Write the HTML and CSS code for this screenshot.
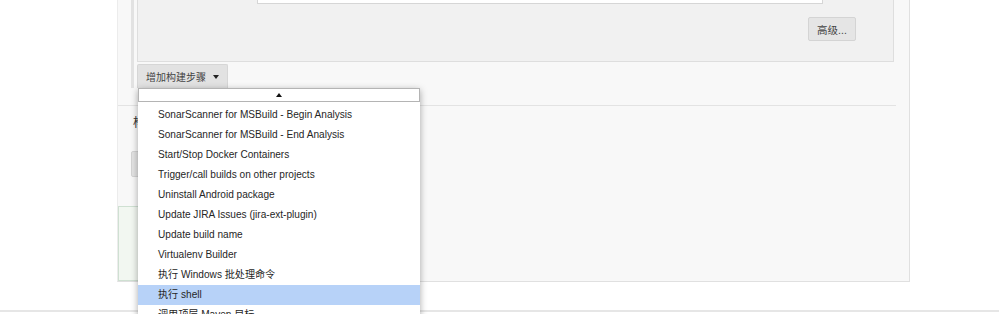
FILE: index.html
```html
<!DOCTYPE html>
<html lang="zh">
<head>
<meta charset="utf-8">
<link rel="stylesheet" href="styles.css">
</head>
<body>
<div class="page">
  <div class="build">
    <div class="chunk">
      <div class="textarea"></div>
      <div class="adv-row"><button class="btn adv">高级...</button></div>
    </div>
    <button class="add-step"><span>增加构建步骤</span><span class="caret"></span></button>
  </div>
  <div class="sep"></div>
  <div class="post">
    <div class="post-title">构建后操作</div>
    <button class="btn post-btn" aria-label="增加构建后操作步骤"></button>
    <div class="greenbox"></div>
  </div>

  <div class="menu">
    <div class="menu-up"><span class="up"></span></div>
    <ul class="menu-list">
      <li>SonarScanner for MSBuild - Begin Analysis</li>
      <li>SonarScanner for MSBuild - End Analysis</li>
      <li>Start/Stop Docker Containers</li>
      <li>Trigger/call builds on other projects</li>
      <li>Uninstall Android package</li>
      <li>Update JIRA Issues (jira-ext-plugin)</li>
      <li>Update build name</li>
      <li>Virtualenv Builder</li>
      <li>执行 Windows 批处理命令</li>
      <li class="active">执行 shell</li>
      <li>调用顶层 Maven 目标</li>
    </ul>
  </div>
</div>
<div class="footer-line"></div>
</body>
</html>
```

FILE: styles.css
```css
* { box-sizing: border-box; }
html, body { margin: 0; padding: 0; background: #fff; }
body {
  font-family: "Liberation Sans", Arial, "Noto Sans CJK SC", sans-serif;
  font-size: 10px;
  color: #333;
  overflow: hidden;
  height: 314px;
}
.page {
  position: relative;
  margin-left: 117px;
  width: 793px;
  height: 282px;
  background: #f8f8f8;
  border-left: 1px solid #ececec;
  border-right: 1px solid #e0e0e0;
  border-bottom: 1px solid #e0e0e0;
}
.build {
  margin-left: 13px;
  border-left: 3px solid #e2e2e2;
  padding-left: 3px;
  height: 88px;
}
.chunk {
  width: 757px;
  height: 62px;
  background: #f1f1f1;
  border: 1px solid #dedede;
  border-top: none;
  padding-left: 119px;
}
.textarea {
  width: 566px;
  height: 4px;
  background: #fff;
  border: 1px solid #d6d6d6;
  border-top: none;
}
.adv-row {
  display: flex;
  justify-content: flex-end;
  padding-top: 13px;
  padding-right: 37px;
}
.btn {
  font-family: "Liberation Sans", Arial, "Noto Sans CJK SC", sans-serif;
  font-size: 10.5px;
  color: #444;
  background: #e5e5e5;
  border: 1px solid #d4d4d4;
  border-radius: 2px;
  padding: 0;
}
.adv {
  width: 48px;
  height: 24px;
}
.add-step {
  margin-top: 2px;
  width: 91px;
  height: 24px;
  display: flex;
  align-items: center;
  justify-content: space-between;
  padding: 0 8px 0 8px;
  background: #e2e2e2;
  border: 1px solid #d6d6d6;
  border-bottom: none;
  border-radius: 2px 2px 0 0;
  font-family: "Liberation Sans", Arial, "Noto Sans CJK SC", sans-serif;
  font-size: 10px;
  color: #444;
}
.caret {
  width: 0;
  height: 0;
  border-left: 3.5px solid transparent;
  border-right: 3.5px solid transparent;
  border-top: 4px solid #222;
}
.sep {
  margin-top: 17px;
  width: 778px;
  height: 1px;
  background: #e3e3e3;
}
.post {
  padding-top: 10px;
}
.post-title {
  margin-left: 15px;
  font-size: 12px;
  color: #333;
  height: 14px;
  line-height: 14px;
}
.post-btn {
  display: block;
  margin-top: 21px;
  margin-left: 13px;
  width: 120px;
  height: 26px;
  background: #e3e3e3;
}
.greenbox {
  margin-top: 29px;
  width: 300px;
  height: 75px;
  background: #f2f7f1;
  border: 1px solid #cfe0d2;
}
.menu {
  position: absolute;
  left: 20px;
  top: 88px;
  width: 282px;
  height: 240px;
  background: #fff;
  box-shadow: 0 2px 7px rgba(0,0,0,0.35);
}
.menu-up {
  height: 14px;
  border: 1px solid #b4b4b4;
  display: flex;
  justify-content: center;
  align-items: center;
}
.up {
  width: 0;
  height: 0;
  border-left: 3px solid transparent;
  border-right: 3px solid transparent;
  border-bottom: 4px solid #111;
}
.menu-list {
  list-style: none;
  margin: 0;
  padding: 3px 0 0 0;
}
.menu-list li {
  height: 20px;
  line-height: 20px;
  padding-left: 20px;
  font-size: 10.1px;
  color: #262626;
  white-space: nowrap;
}
.menu-list li.active {
  background: #b7d2f8;
}
.footer-line {
  margin-top: 28px;
  height: 2px;
  background: #e6e6e6;
}
```
